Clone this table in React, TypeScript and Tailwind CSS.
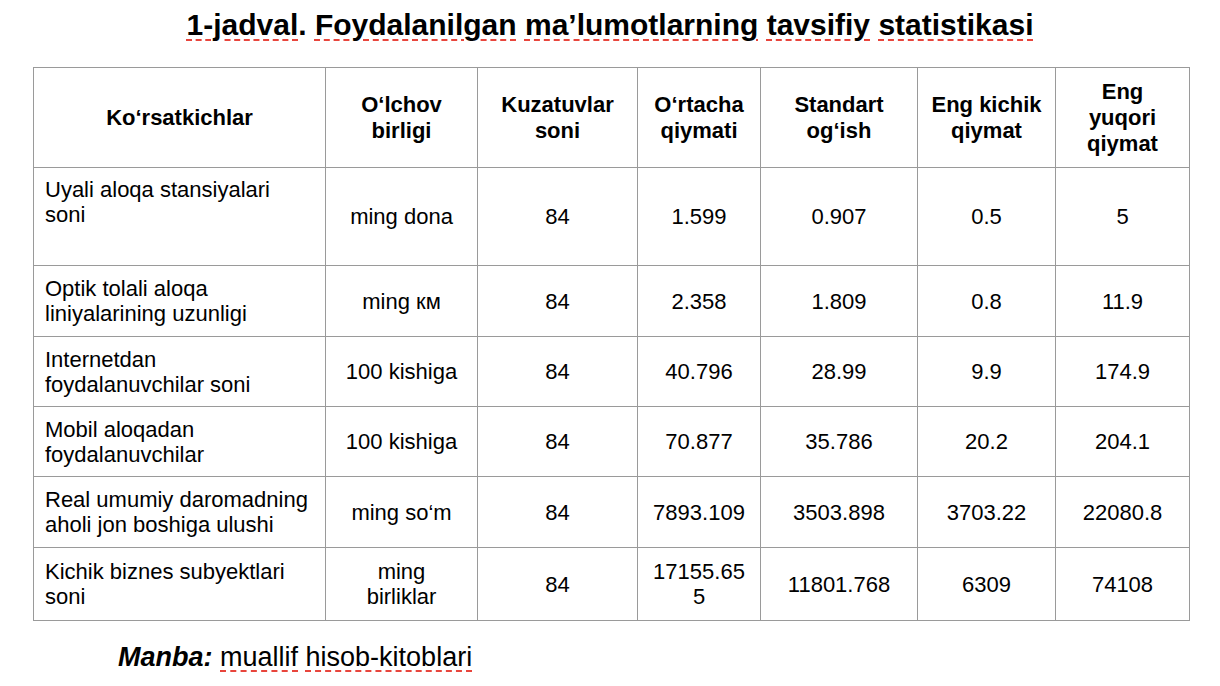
import type { ReactNode } from "react";

type Row = {
  name: ReactNode;
  unit: ReactNode;
  count: string;
  mean: ReactNode;
  sd: string;
  min: string;
  max: string;
  height: string;
  topName?: boolean;
};

const rows: Row[] = [
  {
    name: (
      <>
        Uyali aloqa stansiyalari
        <br />
        soni
      </>
    ),
    unit: "ming dona",
    count: "84",
    mean: "1.599",
    sd: "0.907",
    min: "0.5",
    max: "5",
    height: "h-[98px]",
    topName: true,
  },
  {
    name: (
      <>
        Optik tolali aloqa
        <br />
        liniyalarining uzunligi
      </>
    ),
    unit: "ming км",
    count: "84",
    mean: "2.358",
    sd: "1.809",
    min: "0.8",
    max: "11.9",
    height: "h-[71px]",
  },
  {
    name: (
      <>
        Internetdan
        <br />
        foydalanuvchilar soni
      </>
    ),
    unit: "100 kishiga",
    count: "84",
    mean: "40.796",
    sd: "28.99",
    min: "9.9",
    max: "174.9",
    height: "h-[70px]",
  },
  {
    name: (
      <>
        Mobil aloqadan
        <br />
        foydalanuvchilar
      </>
    ),
    unit: "100 kishiga",
    count: "84",
    mean: "70.877",
    sd: "35.786",
    min: "20.2",
    max: "204.1",
    height: "h-[70px]",
  },
  {
    name: (
      <>
        Real umumiy daromadning
        <br />
        aholi jon boshiga ulushi
      </>
    ),
    unit: "ming so‘m",
    count: "84",
    mean: "7893.109",
    sd: "3503.898",
    min: "3703.22",
    max: "22080.8",
    height: "h-[71px]",
  },
  {
    name: (
      <>
        Kichik biznes subyektlari
        <br />
        soni
      </>
    ),
    unit: (
      <>
        ming
        <br />
        birliklar
      </>
    ),
    count: "84",
    mean: (
      <>
        17155.65
        <br />5
      </>
    ),
    sd: "11801.768",
    min: "6309",
    max: "74108",
    height: "h-[73px]",
  },
];

// red spell-check dashes under a word
function Spell({ children }: { children: ReactNode }) {
  return (
    <span className="underline decoration-dashed decoration-[#e8453c] decoration-2 underline-offset-[4px]">
      {children}
    </span>
  );
}

const cell = "border border-[#9a9a9a] px-2 text-center align-middle";

export default function App() {
  return (
    <div className="min-h-[686px] w-[1220px] bg-white font-['Liberation_Sans',Arial,sans-serif] text-black">
      <h1 className="pt-[7px] text-center text-[30px] font-bold leading-[35px]">
        <Spell>1-jadval</Spell>. <Spell>Foydalanilgan</Spell>{" "}
        <Spell>ma’lumotlarning</Spell> <Spell>tavsifiy</Spell>{" "}
        <Spell>statistikasi</Spell>
      </h1>

      <table className="ml-[33px] mt-[25px] w-[1156px] table-fixed border-collapse text-[22px] leading-[25px]">
        <colgroup>
          <col className="w-[292px]" />
          <col className="w-[152px]" />
          <col className="w-[160px]" />
          <col className="w-[123px]" />
          <col className="w-[157px]" />
          <col className="w-[138px]" />
          <col className="w-[134px]" />
        </colgroup>
        <thead>
          <tr className="h-[100px] font-bold leading-[26px]">
            <th className={cell}>Ko‘rsatkichlar</th>
            <th className={cell}>
              O‘lchov
              <br />
              birligi
            </th>
            <th className={cell}>
              Kuzatuvlar
              <br />
              soni
            </th>
            <th className={cell}>
              O‘rtacha
              <br />
              qiymati
            </th>
            <th className={cell}>
              Standart
              <br />
              og‘ish
            </th>
            <th className={cell}>
              Eng kichik
              <br />
              qiymat
            </th>
            <th className={cell}>
              Eng
              <br />
              yuqori
              <br />
              qiymat
            </th>
          </tr>
        </thead>
        <tbody>
          {rows.map((r, i) => (
            <tr key={i} className={r.height}>
              <td
                className={
                  r.topName
                    ? "border border-[#9a9a9a] pl-[11px] pr-2 pt-[9px] text-left align-top"
                    : "border border-[#9a9a9a] pl-[11px] pr-2 text-left align-middle"
                }
              >
                {r.name}
              </td>
              <td className={cell}>{r.unit}</td>
              <td className={cell}>{r.count}</td>
              <td className={cell}>{r.mean}</td>
              <td className={cell}>{r.sd}</td>
              <td className={cell}>{r.min}</td>
              <td className={cell}>{r.max}</td>
            </tr>
          ))}
        </tbody>
      </table>

      <p className="ml-[118px] mt-[21px] text-[27px] leading-[31px]">
        <span className="font-bold italic">Manba:</span> <Spell>muallif</Spell>{" "}
        <Spell>hisob-kitoblari</Spell>
      </p>
    </div>
  );
}
